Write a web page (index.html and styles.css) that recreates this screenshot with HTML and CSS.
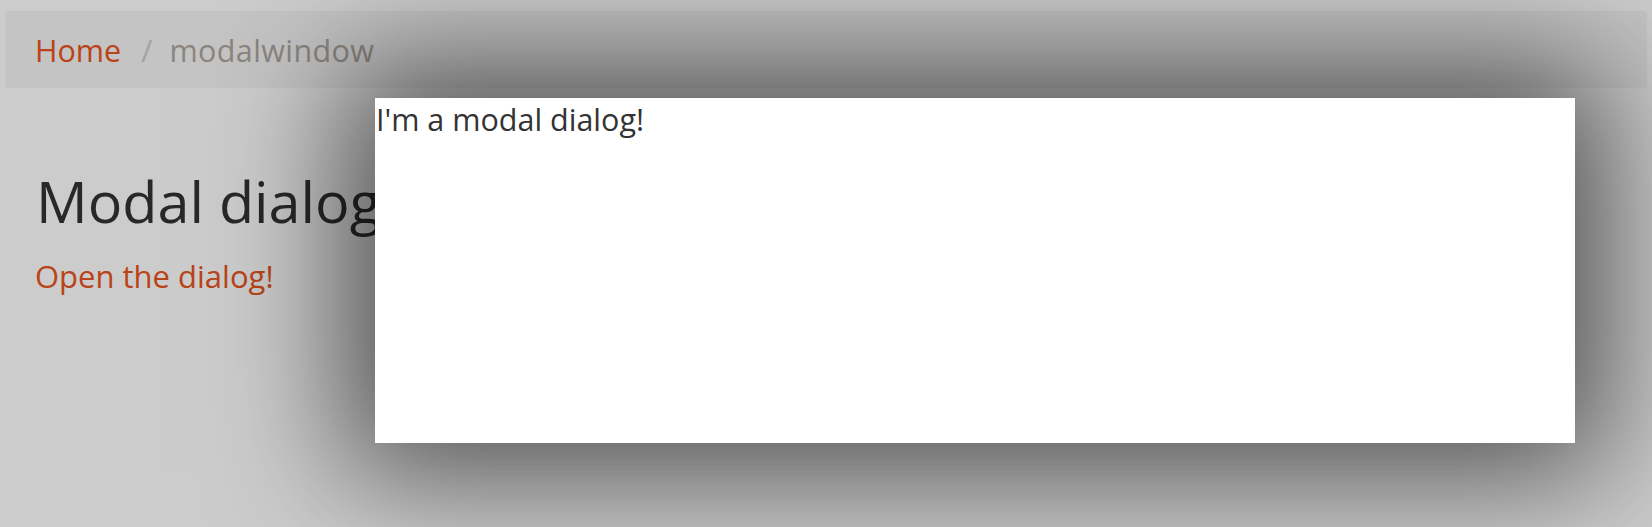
FILE: index.html
```html
<!DOCTYPE html>
<html lang="en">
<head>
<meta charset="utf-8">
<title>modalwindow</title>
<link rel="stylesheet" href="styles.css">
</head>
<body>
<div class="page">
  <nav class="breadcrumb">
    <a class="crumb-link" href="#">Home</a>
    <span class="crumb-sep">/</span>
    <span class="crumb-active">modalwindow</span>
  </nav>
  <h1 class="title">Modal dialog</h1>
  <a class="open-link" href="#">Open the dialog!</a>
</div>
<div class="backdrop"></div>
<div class="dialog">I'm a modal dialog!</div>
</body>
</html>
```

FILE: styles.css
```css
html, body {
  margin: 0;
  padding: 0;
  background: #ffffff;
}

body {
  position: relative;
  height: 527px;
  overflow: hidden;
  font-family: "Open Sans", "Noto Sans", sans-serif;
  color: #333333;
}

.page {
  display: flex;
  flex-direction: column;
  align-items: flex-start;
  padding: 11px 5px 0;
}

.breadcrumb {
  align-self: stretch;
  display: flex;
  align-items: center;
  height: 77px;
  padding: 0 30px;
  background: #f5f5f5;
  border-radius: 4px;
  font-size: 30.5px;
  line-height: normal;
}

.crumb-link {
  color: #e95420;
  text-decoration: none;
}

.crumb-sep {
  color: #cccccc;
  margin: 0 17px 0 20px;
}

.crumb-active {
  color: #aea79f;
  letter-spacing: 0.4px;
}

.title {
  margin: 74px 0 0 31px;
  font-size: 57.5px;
  font-weight: 400;
  line-height: normal;
  color: #333333;
}

.open-link {
  margin: 15px 0 0 30px;
  font-size: 31px;
  line-height: normal;
  color: #e95420;
  text-decoration: none;
}

.backdrop {
  position: absolute;
  inset: 0;
  background: rgba(0, 0, 0, 0.2);
}

.dialog {
  position: absolute;
  left: 375px;
  top: 98px;
  width: 1200px;
  height: 345px;
  box-sizing: border-box;
  padding: 0 0 0 1px;
  background: #ffffff;
  color: #333333;
  font-size: 30.5px;
  line-height: normal;
  box-shadow: 0 0 120px 30px rgba(0, 0, 0, 0.61);
}
```
